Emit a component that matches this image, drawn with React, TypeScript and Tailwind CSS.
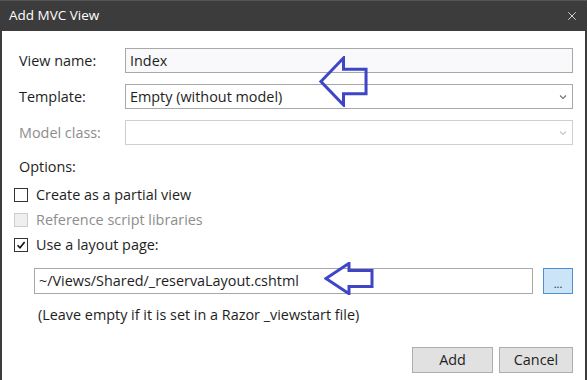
import { X } from "lucide-react";

const font = { fontFamily: '"Segoe UI", "Open Sans", "Noto Sans", sans-serif' };

function Chevron({ disabled }: { disabled?: boolean }) {
  return (
    <svg width="8" height="6" viewBox="0 0 8 6" className="shrink-0">
      <path
        d="M1 1.5 L4 4.5 L7 1.5"
        fill="none"
        stroke={disabled ? "#c4c4c4" : "#707070"}
        strokeWidth="1.1"
      />
    </svg>
  );
}

function Arrow({ className }: { className: string }) {
  // hollow blue arrow pointing left
  return (
    <svg
      className={`absolute pointer-events-none ${className}`}
      viewBox="0 0 50 50"
      preserveAspectRatio="none"
    >
      <path
        d="M2 25 L25 2 L25 13 L48 13 L48 37 L25 37 L25 48 Z"
        fill="none"
        stroke="#3e46c6"
        strokeWidth="3"
        vectorEffect="non-scaling-stroke"
        strokeLinejoin="miter"
      />
    </svg>
  );
}

function Check({ checked, disabled }: { checked?: boolean; disabled?: boolean }) {
  return (
    <div
      className={`w-[14px] h-[14px] border flex items-center justify-center shrink-0 ${
        disabled ? "border-[#cccccc] bg-[#efefef]" : "border-[#333333] bg-white"
      }`}
    >
      {checked && (
        <svg width="10" height="10" viewBox="0 0 10 10">
          <path d="M1.5 5.2 L4 7.7 L8.6 2" fill="none" stroke="#111" strokeWidth="1.6" />
        </svg>
      )}
    </div>
  );
}

export default function App() {
  return (
    <div className="w-[588px] h-[380px] bg-white overflow-hidden" style={font}>
      <div className="relative w-[587px] h-[380px] border-x-2 border-[#3c3c3c] bg-white text-[14.4px] text-[#1e1e1e]">
        {/* title bar */}
        <div className="h-[31px] -mx-[2px] bg-[#3c3c3c] border-t border-[#555] flex items-center justify-between pl-[9px] pr-[8px]">
          <span className="text-white text-[13.5px] leading-none">Add MVC View</span>
          <X className="w-[14px] h-[14px] text-white" strokeWidth={1.3} />
        </div>

        <div className="pl-[17px] pr-[12px] pt-[17px] flex flex-col">
          {/* form rows */}
          <div className="flex flex-col gap-[11px]">
            <div className="flex items-center h-[25px]">
              <span className="w-[106px]">View name:</span>
              <div className="flex-1 h-full border border-[#a8a8a8] bg-[#f9f9fb] flex items-center pl-[4px]">
                Index
              </div>
            </div>
            <div className="flex items-center h-[25px]">
              <span className="w-[106px]">Template:</span>
              <div className="flex-1 h-full border border-[#a8a8a8] bg-white flex items-center justify-between pl-[4px] pr-[5px]">
                <span>Empty (without model)</span>
                <Chevron />
              </div>
            </div>
            <div className="flex items-center h-[25px]">
              <span className="w-[106px] text-[#8d8d8d]">Model class:</span>
              <div className="flex-1 h-full border border-[#cfcfcf] bg-white flex items-center justify-end pr-[5px]">
                <Chevron disabled />
              </div>
            </div>
          </div>

          {/* options */}
          <div className="mt-[12px] h-[20px] flex items-center">Options:</div>
          <div className="mt-[11px] -ml-[5px] flex flex-col gap-[11px]">
            <div className="flex items-center gap-[8px] h-[14px]">
              <Check />
              <span>Create as a partial view</span>
            </div>
            <div className="flex items-center gap-[8px] h-[14px]">
              <Check disabled />
              <span className="text-[#8d8d8d]">Reference script libraries</span>
            </div>
            <div className="flex items-center gap-[8px] h-[14px]">
              <Check checked />
              <span>Use a layout page:</span>
            </div>
          </div>

          <div className="mt-[16px] ml-[15px] flex items-center h-[26px] gap-[10px]">
            <div className="flex-1 h-full border border-[#a8a8a8] bg-white flex items-center pl-[4px]">
              ~/Views/Shared/_reservaLayout.cshtml
            </div>
            <div className="w-[30px] h-full border border-[#4f8fd0] bg-[#cce4f7] flex items-center justify-center text-[11px] leading-none pt-[4px]">
              ...
            </div>
          </div>

          <div className="mt-[11px] ml-[19px] h-[20px] flex items-center">
            (Leave empty if it is set in a Razor _viewstart file)
          </div>

          <div className="mt-[22px] flex justify-end gap-[6px]">
            <div className="w-[81px] h-[26px] border border-[#adadad] bg-[#e1e1e1] flex items-center justify-center">
              Add
            </div>
            <div className="w-[74px] h-[26px] border border-[#adadad] bg-[#e1e1e1] flex items-center justify-center">
              Cancel
            </div>
          </div>
        </div>

        <Arrow className="left-[317px] top-[56px] w-[49px] h-[51px]" />
        <Arrow className="left-[322px] top-[262px] w-[50px] h-[33px]" />
      </div>
    </div>
  );
}
